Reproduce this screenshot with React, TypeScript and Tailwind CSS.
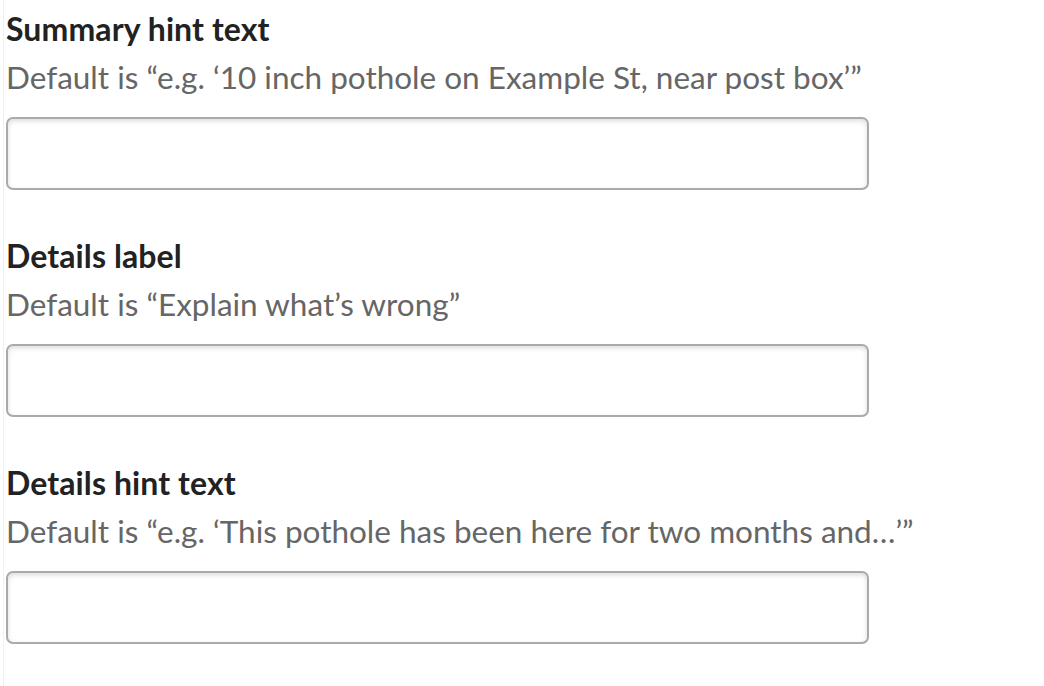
import React from "react";

const fields = [
  { label: "Summary hint text", hint: "Default is \u201ce.g. \u201810 inch pothole on Example St, near post box\u2019\u201d" },
  { label: "Details label", hint: "Default is \u201cExplain what\u2019s wrong\u201d" },
  { label: "Details hint text", hint: "Default is \u201ce.g. \u2018This pothole has been here for two months and\u2026\u2019\u201d" },
];

export default function App() {
  return (
    <div className="w-[1044px] h-[686px] bg-white overflow-hidden relative" style={{ fontFamily: "Lato, 'Noto Sans', sans-serif" }}>
      <div className="absolute left-[3px] top-0 bottom-0 w-px bg-[#f0f0f0]" />
      <div className="pl-[6px] pt-[5px] flex flex-col gap-[42px]">
        {fields.map((f) => (
          <div key={f.label} className="flex flex-col">
            <div className="text-[32px] leading-[48px] font-bold text-[#222222] tracking-[0.1px]">{f.label}</div>
            <div className="text-[31.5px] leading-[48px] text-[#666666]">{f.hint}</div>
            <input
              type="text"
              className="mt-[16px] w-[863px] h-[73px] rounded-[7px] border-2 border-[#aaaaaa] bg-white shadow-[inset_0_2px_5px_rgba(0,0,0,0.14)] outline-none"
            />
          </div>
        ))}
      </div>
    </div>
  );
}
